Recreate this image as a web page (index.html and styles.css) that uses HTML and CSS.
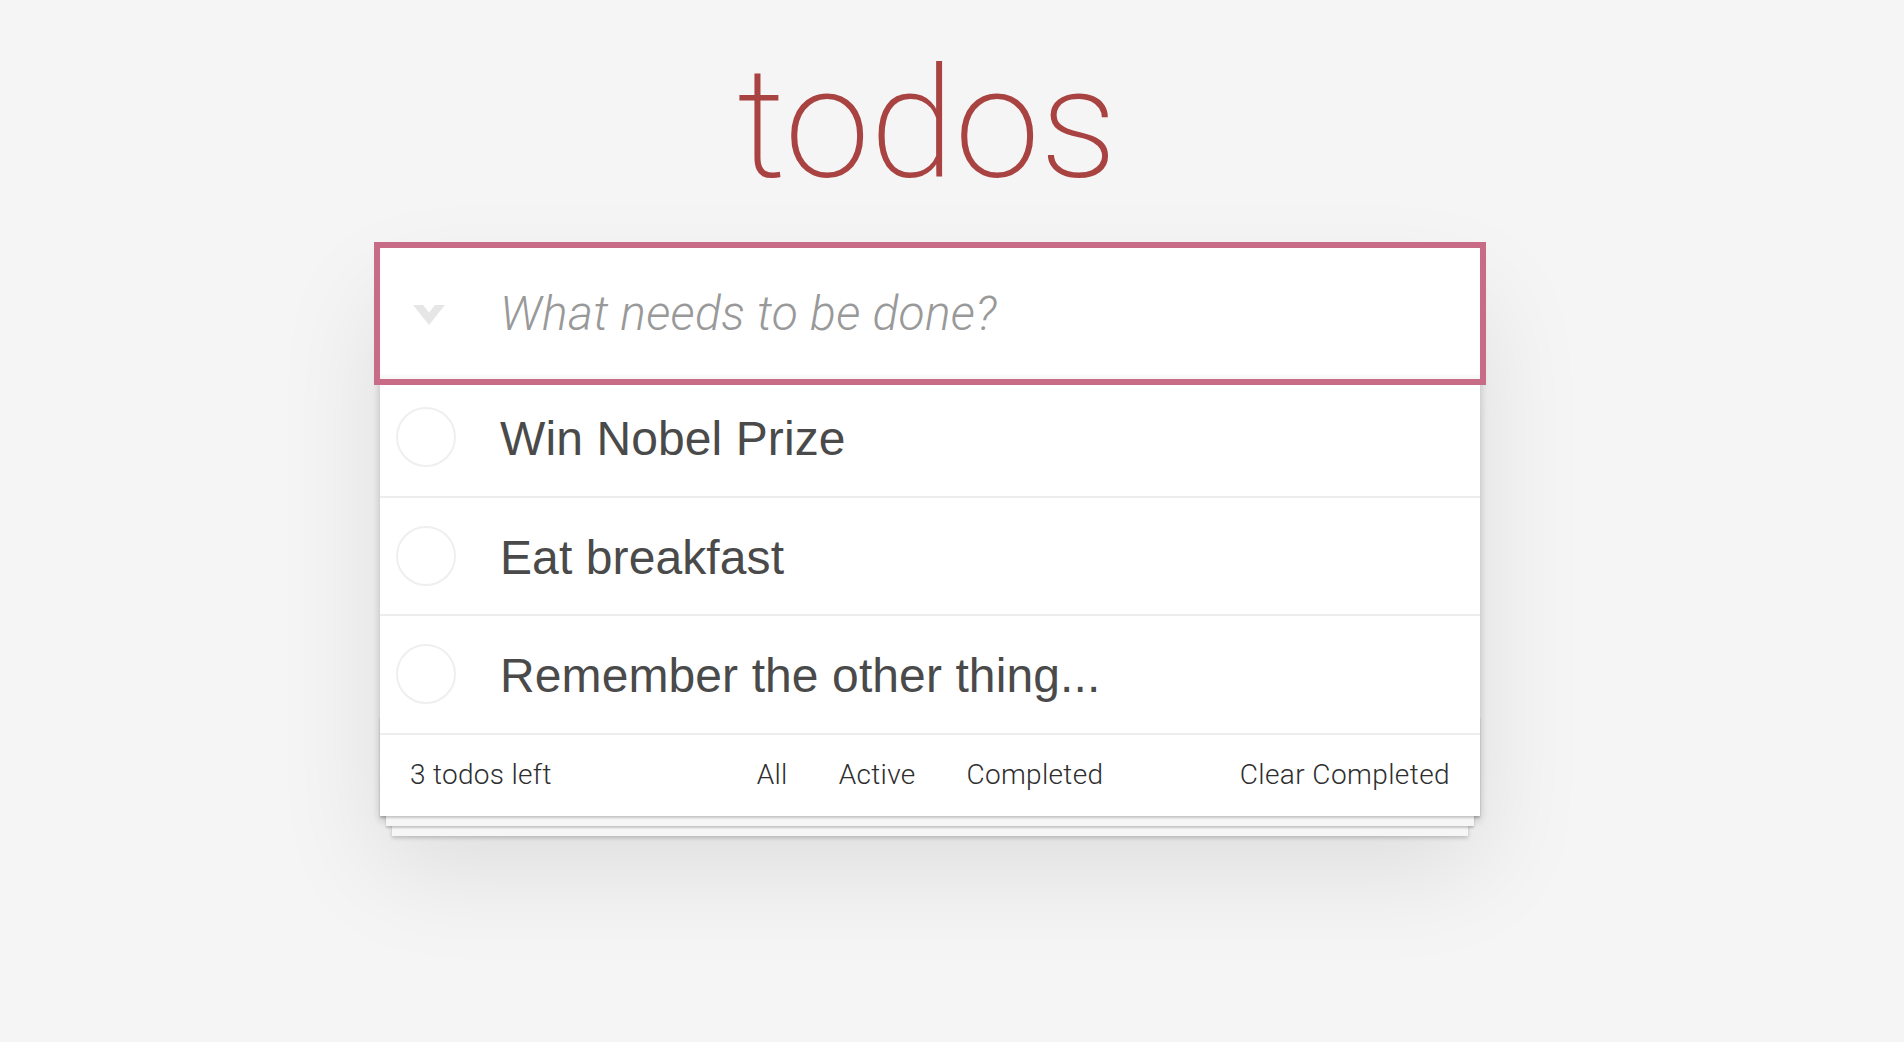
FILE: index.html
```html
<!DOCTYPE html>
<html lang="en">
<head>
<meta charset="utf-8">
<title>Todos</title>
<link rel="stylesheet" href="styles.css">
</head>
<body>
<main class="page">
  <h1 class="title">todos</h1>
  <section class="todoapp">
    <header class="new-row">
      <label class="toggle-all" aria-label="Mark all as complete">
        <svg width="32" height="20" viewBox="0 0 32 20"><path d="M0 0H10L16 7.5L22 0H32L16 20Z" fill="#e6e6e6"/></svg>
      </label>
      <input class="new-todo" type="text" placeholder="What needs to be done?">
    </header>
    <ul class="todo-list">
      <li class="todo"><span class="toggle"></span><label class="todo-label">Win Nobel Prize</label></li>
      <li class="todo"><span class="toggle"></span><label class="todo-label">Eat breakfast</label></li>
      <li class="todo"><span class="toggle"></span><label class="todo-label">Remember the other thing...</label></li>
    </ul>
    <footer class="footer">
      <span class="count">3 todos left</span>
      <ul class="filters">
        <li><a href="#/" class="filter">All</a></li>
        <li><a href="#/active" class="filter">Active</a></li>
        <li><a href="#/completed" class="filter">Completed</a></li>
      </ul>
      <button class="clear" type="button">Clear Completed</button>
    </footer>
  </section>
</main>
</body>
</html>
```

FILE: styles.css
```css
* { box-sizing: border-box; }

html, body {
  margin: 0;
  padding: 0;
}

body {
  background: #f5f5f5;
  font-family: Roboto, "Liberation Sans", sans-serif;
  font-weight: 300;
  color: #4d4d4d;
  padding-right: 44px;
  min-height: 100vh;
}

.page {
  width: 1100px;
  margin: 0 auto;
}

.title {
  margin: 45px 0 43px;
  font-size: 154px;
  line-height: 160px;
  font-weight: 200;
  color: #a84342;
  text-align: center;
  padding-right: 6px;
}

.todoapp {
  background: #fff;
  position: relative;
  box-shadow: 0 4px 8px 0 rgba(0, 0, 0, 0.2), 0 50px 100px 0 rgba(0, 0, 0, 0.1);
}

.new-row {
  position: relative;
  z-index: 2;
  display: flex;
  align-items: center;
  height: 131px;
  background: #fff;
  outline: 6px solid #c86b87;
  box-shadow: inset 0 -4px 2px rgba(0, 0, 0, 0.03);
}

.toggle-all {
  width: 120px;
  height: 100%;
  padding-left: 33px;
  padding-top: 3px;
  display: flex;
  align-items: center;
  flex: none;
}

.toggle-all svg { display: block; }

.new-todo {
  flex: 1;
  min-width: 0;
  height: 100%;
  border: 0;
  padding: 0 30px 0 0;
  margin: 0;
  background: transparent;
  outline: none;
  font-family: Roboto, "Liberation Sans", sans-serif;
  font-size: 48px;
  font-style: italic;
  font-weight: 300;
  letter-spacing: 0.3px;
  color: #4d4d4d;
}

.new-todo::placeholder {
  color: #999;
  font-style: italic;
  font-weight: 300;
}

.todo-list {
  list-style: none;
  margin: 0;
  padding: 0;
}

.todo {
  display: flex;
  align-items: center;
  height: 118.5px;
  border-bottom: 2px solid #ededed;
}

.toggle {
  flex: none;
  width: 60px;
  height: 60px;
  margin-left: 16px;
  border: 2px solid #efefef;
  border-radius: 50%;
}

.todo-label {
  margin-left: 44px;
  margin-top: 4px;
  font-family: "Liberation Sans", Arial, sans-serif;
  font-size: 48px;
  font-weight: 400;
  line-height: 1.2;
  color: #4a4a4a;
  letter-spacing: 0.1px;
}

.footer {
  position: relative;
  display: grid;
  grid-template-columns: 1fr auto 1fr;
  align-items: center;
  height: 81px;
  padding: 0 30px;
  font-size: 28px;
  line-height: 40px;
  letter-spacing: 0.3px;
  color: #2e2e2e;
}

.footer::before {
  content: "";
  position: absolute;
  right: 0;
  bottom: 0;
  left: 0;
  height: 100px;
  overflow: hidden;
  box-shadow: 0 2px 2px rgba(0, 0, 0, 0.2),
    0 16px 0 -6px #f6f6f6,
    0 18px 2px -6px rgba(0, 0, 0, 0.2),
    0 32px 0 -12px #f6f6f6,
    0 34px 4px -12px rgba(0, 0, 0, 0.2);
}

.count { justify-self: start; }

.filters {
  display: flex;
  gap: 51px;
  list-style: none;
  margin: 0;
  padding: 0;
}

.filter {
  color: inherit;
  text-decoration: none;
}

.clear {
  justify-self: end;
  border: 0;
  padding: 0;
  margin: 0;
  background: none;
  font: inherit;
  line-height: 40px;
  letter-spacing: 0.4px;
  color: inherit;
}
```
